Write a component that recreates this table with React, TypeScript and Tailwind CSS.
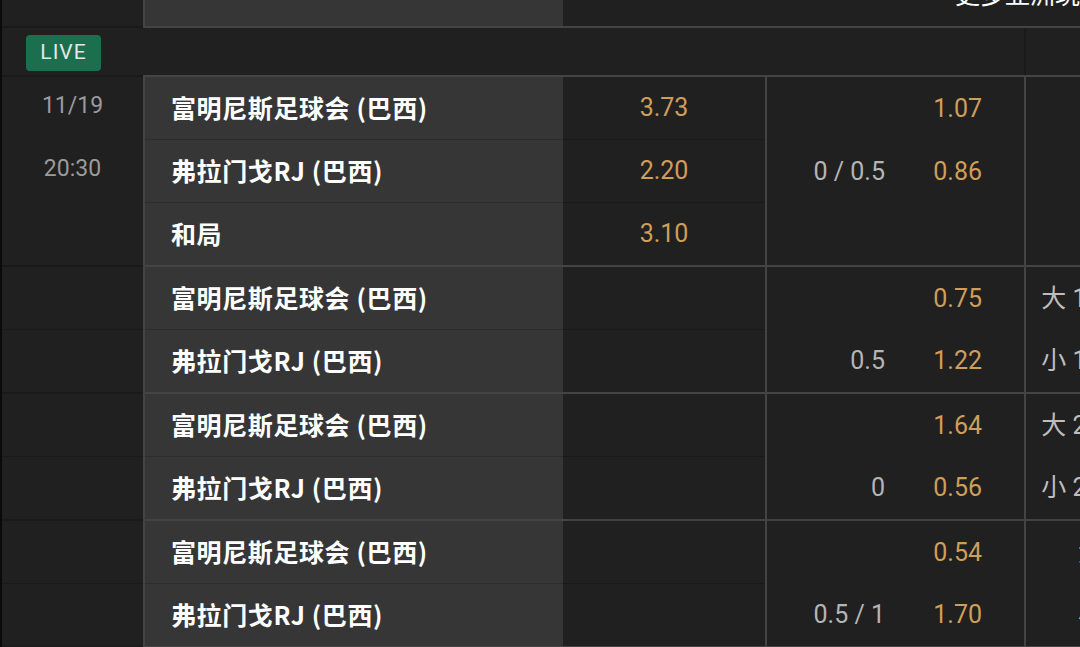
import React from 'react';

type Row = {
  team: string;
  o1?: string;
  hcp?: string;
  o2?: string;
  ou?: string;
};

type Group = {
  dates?: string[];
  rows: Row[];
};

const HOME = '富明尼斯足球会 (巴西)';
const AWAY = '弗拉门戈RJ (巴西)';

const groups: Group[] = [
  {
    dates: ['11/19', '20:30'],
    rows: [
      { team: HOME, o1: '3.73', o2: '1.07' },
      { team: AWAY, o1: '2.20', hcp: '0 / 0.5', o2: '0.86' },
      { team: '和局', o1: '3.10' },
    ],
  },
  {
    rows: [
      { team: HOME, o2: '0.75', ou: '大 1 / 1.5' },
      { team: AWAY, hcp: '0.5', o2: '1.22', ou: '小 1 / 1.5' },
    ],
  },
  {
    rows: [
      { team: HOME, o2: '1.64', ou: '大 2 / 2.5' },
      { team: AWAY, hcp: '0', o2: '0.56', ou: '小 2 / 2.5' },
    ],
  },
  {
    rows: [
      { team: HOME, o2: '0.54', ou: '大 2.5' },
      { team: AWAY, hcp: '0.5 / 1', o2: '1.70', ou: '小 2.5' },
    ],
  },
];

// last row of each group is 1px shorter so the group pitch matches
const rowH = (i: number, n: number) => (i < n - 1 ? 'h-[63px]' : 'h-[62px]');

function MatchGroup({ group }: { group: Group }) {
  const n = group.rows.length;
  return (
    <div className="flex">
      {/* date column */}
      <div className="w-[141px] shrink-0 flex flex-col border-b-2 border-[#1a1a1a]">
        {group.rows.map((_, i) => (
          <div
            key={i}
            className={`${rowH(i, n)} flex items-center justify-center pb-[4px] text-[23px] text-[#9b9b9b] ${
              !group.dates && i < n - 1 ? 'border-b border-[#1a1a1a]' : ''
            }`}
          >
            {group.dates ? group.dates[i] : ''}
          </div>
        ))}
      </div>

      {/* teams */}
      <div className="w-[420px] shrink-0 flex flex-col bg-[#363636] border-l-2 border-l-[#444] border-b-2 border-b-[#444]">
        {group.rows.map((r, i) => (
          <div
            key={i}
            className={`${rowH(i, n)} flex items-center pl-[26px] text-[25px] font-bold tracking-[0.6px] text-white font-['Noto_Sans_CJK_SC',sans-serif] whitespace-nowrap ${
              i < n - 1 ? 'border-b border-[#2c2c2c]' : ''
            }`}
          >
            {r.team}
          </div>
        ))}
      </div>

      {/* 1x2 */}
      <div className="w-[202px] shrink-0 flex flex-col border-b-2 border-[#444]">
        {group.rows.map((r, i) => (
          <div
            key={i}
            className={`${rowH(i, n)} flex items-center justify-center text-[25px] text-[#cf9e58] ${
              i < n - 1 ? 'border-b border-[#1a1a1a]' : ''
            }`}
          >
            {r.o1}
          </div>
        ))}
      </div>

      {/* handicap */}
      <div className="w-[259px] shrink-0 flex flex-col border-l-2 border-l-[#444] border-b-2 border-b-[#444]">
        {group.rows.map((r, i) => (
          <div key={i} className={`${rowH(i, n)} flex items-center text-[25px]`}>
            <span className="w-[118px] text-right text-[#b5b5b5]">{r.hcp}</span>
            <span className="w-[97px] text-right text-[#cf9e58]">{r.o2}</span>
          </div>
        ))}
      </div>

      {/* over / under */}
      <div className="w-[320px] shrink-0 flex flex-col border-l-2 border-l-[#444] border-b-2 border-b-[#444]">
        {group.rows.map((r, i) => (
          <div key={i} className={`${rowH(i, n)} flex items-center text-[25px]`}>
            <span className="w-[118px] text-right whitespace-nowrap text-[#bdbdbd]">{r.ou}</span>
          </div>
        ))}
      </div>
    </div>
  );
}

export default function App() {
  return (
    <div className="w-[1080px] h-[647px] overflow-hidden bg-[#0a0a0a] font-[Roboto,'Noto_Sans_CJK_SC',sans-serif]">
      <div className="ml-[2px] w-[1400px] bg-[#202020] -mt-[32px]">
        {/* header (scrolled, only bottom visible) */}
        <div className="flex h-[60px]">
          <div className="w-[141px] shrink-0 border-b-2 border-[#1a1a1a]" />
          <div className="w-[420px] shrink-0 bg-[#363636] border-l-2 border-l-[#444] border-b-2 border-b-[#444]" />
          <div className="flex-1 flex items-center pl-[392px] pb-[2px] text-[25px] text-white border-b-2 border-[#444] whitespace-nowrap">
            更多亚洲玩法
          </div>
        </div>

        {/* live row */}
        <div className="flex h-[49px]">
          <div className="w-[141px] shrink-0 flex items-center pl-[24px] pt-[2px] border-b-2 border-[#1a1a1a]">
            <span className="w-[75px] h-[36px] rounded-[4px] bg-[#1b6f4f] flex items-center justify-center text-[21px] tracking-[1px] text-[#e6e6e6]">
              LIVE
            </span>
          </div>
          <div className="flex-1 flex border-b-2 border-[#444]">
            <div className="w-[881px] shrink-0" />
            <div className="flex-1 border-l-2 border-[#1a1a1a]" />
          </div>
        </div>

        {groups.map((g, i) => (
          <MatchGroup key={i} group={g} />
        ))}
      </div>
    </div>
  );
}
